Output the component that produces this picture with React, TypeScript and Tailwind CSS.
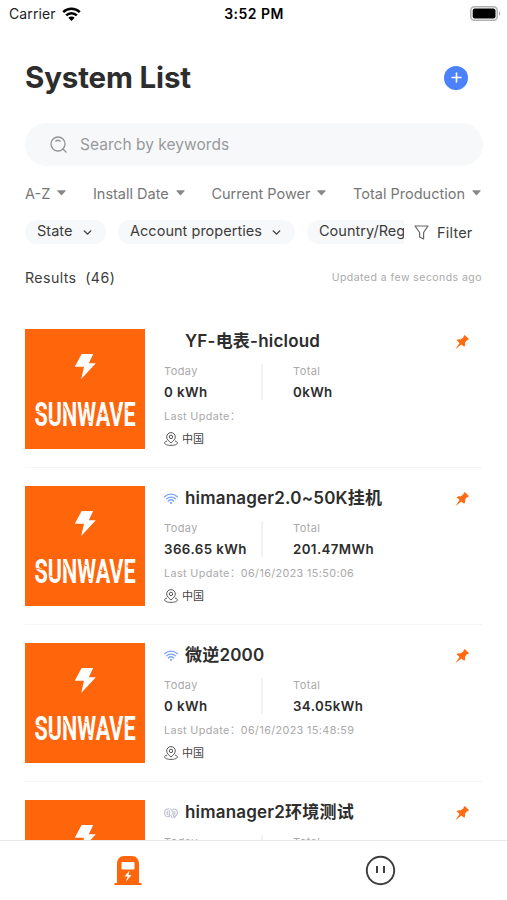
import React, { useState } from 'react';
import { Plus, ChevronDown } from 'lucide-react';

type Connection = 'none' | 'wifi' | 'offline';

interface System {
    name: string;
    today: string;
    total: string;
    lastUpdate: string;
    location: string;
    connection: Connection;
}

const systems: System[] = [
    { name: 'YF-电表-hicloud', today: '0 kWh', total: '0kWh', lastUpdate: '', location: '中国', connection: 'none' },
    { name: 'himanager2.0~50K挂机', today: '366.65 kWh', total: '201.47MWh', lastUpdate: '06/16/2023 15:50:06', location: '中国', connection: 'wifi' },
    { name: '微逆2000', today: '0 kWh', total: '34.05kWh', lastUpdate: '06/16/2023 15:48:59', location: '中国', connection: 'wifi' },
    { name: 'himanager2环境测试', today: '0 kWh', total: '0kWh', lastUpdate: '', location: '中国', connection: 'offline' },
];

const sortOptions = ['A-Z', 'Install Date', 'Current Power', 'Total Production'];

const StatusBar = () => (
    <div className="grid h-[27px] shrink-0 grid-cols-3 items-center pl-[9px] pr-[6px] text-black">
        <div className="flex items-center gap-[6px]">
            <span className="text-[14px] tracking-[0.1px] text-[#222]">Carrier</span>
            <svg width="19" height="14" viewBox="0 0 19 14" fill="none" stroke="black" strokeWidth="2.5">
                <path d="M1.2 5.2a12 12 0 0 1 16.6 0" />
                <path d="M4.2 8.4a7.6 7.6 0 0 1 10.6 0" />
                <path d="M9.5 14 6.3 10.7a4.6 4.6 0 0 1 6.4 0z" fill="black" stroke="none" />
            </svg>
        </div>
        <span className="-ml-[2px] text-center text-[14px] font-semibold tracking-[0.45px]">3:52 PM</span>
        <div className="flex justify-end">
            <svg width="31" height="15" viewBox="0 0 31 15">
                <rect x="0.8" y="0.8" width="26.4" height="13.4" rx="3.6" fill="#fff" stroke="#b0b0b0" strokeWidth="1.5" />
                <rect x="2.7" y="2.5" width="22.8" height="10" rx="2" fill="#000" />
                <path d="M29 5.2c1.6.6 1.6 4 0 4.6z" fill="#a8a8a8" />
            </svg>
        </div>
    </div>
);

const Logo = () => (
    <svg className="h-[120px] w-[120px] shrink-0" viewBox="0 0 120 120">
        <rect width="120" height="120" fill="#ff650b" />
        <path d="M56.6 25h11.6l-4.4 9.3h7L56.2 50l2.8-12.3h-9.2z" fill="#fff" />
        <g transform="translate(9.6 97) scale(0.635 1)">
            <text x="0" y="0" fill="#fff" fontSize="34" fontWeight="700" fontFamily="Roboto, sans-serif" textLength="159" lengthAdjust="spacing">SUNWAVE</text>
        </g>
        {/* worn streaks across the lettering */}
        <g stroke="#ff650b" strokeWidth="0.9" fill="none">
            <path d="M10 82l9 2M27 75l3 4M25 90l8 2M39 77l4 8M44 73v5M56 77l6 3M60 91l6 2M75 84l6 2M77 92l5 1M90 75l4 9M101 80l9 1M103 91l7 1" />
        </g>
    </svg>
);

const ConnectionIcon = ({ type }: { type: Connection }) => {
    if (type === 'wifi') {
        return (
            <svg width="14" height="12" viewBox="0 0 14 12" fill="none" stroke="#7ba3fa" strokeWidth="1.3" strokeLinecap="round">
                <path d="M.7 3.7a9.2 9.2 0 0 1 12.6 0M2.5 5.9a6.5 6.5 0 0 1 9 0M4.3 8a4 4 0 0 1 5.4 0" />
                <path d="M5.5 9.8a2.2 2.2 0 0 1 3 0L7 11.3z" fill="#7ba3fa" stroke="none" />
            </svg>
        );
    }
    if (type === 'offline') {
        return (
            <svg width="14" height="12" viewBox="0 0 14 12" fill="none" stroke="#b9bccb" strokeWidth="1.1" strokeLinecap="round">
                <path d="M4.8 1.8 2.2 2.4C1 3 .6 4.5.6 6s.5 2.9 1.7 3.5l2.5.2M3.2 4.4v3.2M5.3 3.5v6M6.7 2l1.400 1.600M6.800 8.500l1.200 2M9.200 2.200l2.200.1c1.400.5 2 1.900 2 3.300 0 1.600-.7 2.700-1.800 3.200l-1.400 1.800-.8-2.600M8.900 4.200v3.400M10.800 4.400v2.800" />
            </svg>
        );
    }
    return null;
};

const PinIcon = () => (
    <svg width="14" height="15" viewBox="0 0 14 15" fill="#ff6b12">
        <path d="M9.1.6c.4-.4.8-.4 1.2 0l3 3c.5.5.5 1 .1 1.3-.4.4-1 .4-1.5.4L10 7.7c.4 1.6.1 3-.8 4L6.3 9.4.4 14.3 4.5 8 1.6 5.3c1-.9 2.5-1.3 4-.8L8.5 2.2c0-.6.1-1.2.6-1.6z" />
    </svg>
);

const LocationIcon = () => (
    <svg width="14" height="14" viewBox="0 0 14 14" fill="none" stroke="#555" strokeWidth="1">
        <path d="M7 11C4.3 8.9 2.7 7 2.7 4.9a4.3 4.3 0 0 1 8.6 0c0 2.1-1.6 4-4.3 6.1z" />
        <circle cx="7" cy="4.9" r="1.7" />
        <path d="M3 9.1c-1.3.3-2.4.9-2.4 1.8C.6 12.4 3.5 13.4 7 13.4s6.4-1 6.4-2.5c0-.9-1.1-1.5-2.4-1.8" />
    </svg>
);

const SystemCard = ({ system }: { system: System }) => (
    <div className="flex h-[157px] shrink-0 border-b border-[#f5f5f5] pt-[18px]">
        <Logo />
        <div className="ml-[19px] min-w-0 flex-1">
            <div className="flex h-[26px] items-center">
                <div className="w-[21px] shrink-0">
                    <ConnectionIcon type={system.connection} />
                </div>
                <span className="flex-1 whitespace-nowrap text-[17px] font-semibold tracking-[0.2px] text-[#2d2d2d]">{system.name}</span>
                <div className="mr-[13px]">
                    <PinIcon />
                </div>
            </div>
            <div className="mt-[8px] flex h-[40px]">
                <div className="w-[97px] whitespace-nowrap">
                    <div className="text-[11px] leading-4 tracking-[0.4px] text-[#a9a9a9]">Today</div>
                    <div className="mt-[3px] text-[13.3px] font-semibold leading-5 tracking-[0.45px] text-[#2d2d2d]">{system.today}</div>
                </div>
                <div className="mt-px h-[36px] w-[2px] bg-[#f2f2f2]"></div>
                <div className="ml-[30px] whitespace-nowrap">
                    <div className="text-[11px] leading-4 tracking-[0.4px] text-[#a9a9a9]">Total</div>
                    <div className="mt-[3px] text-[13.3px] font-semibold leading-5 tracking-[0.4px] text-[#2d2d2d]">{system.total}</div>
                </div>
            </div>
            <div className="mt-[6px] whitespace-nowrap text-[10.8px] leading-4 tracking-[0.38px] text-[#a9a9a9]">
                Last Update：{system.lastUpdate}
            </div>
            <div className="mt-[6px] flex h-4 items-center gap-[4px]">
                <LocationIcon />
                <span className="text-[11px] leading-4 text-[#444]">{system.location}</span>
            </div>
        </div>
    </div>
);

const App = () => {
    const [keyword, setKeyword] = useState('');

    return (
        <div className="flex h-[900px] w-[507px] flex-col overflow-hidden bg-white font-[Inter,'Noto_Sans_CJK_SC',sans-serif]">
            <StatusBar />

            {/* Header */}
            <div className="flex h-[96px] shrink-0 items-center justify-between pl-[25px] pr-[39px] pt-[5px]">
                <h1 className="text-[29.5px] font-bold tracking-[-0.15px] text-[#2d2d2d]">System List</h1>
                <button className="flex h-6 w-6 items-center justify-center rounded-full bg-[#4b82fb] text-white">
                    <Plus className="h-[15px] w-[15px]" strokeWidth={2.6} />
                </button>
            </div>

            {/* Search */}
            <div className="ml-[25px] mr-[24px] flex h-[43px] shrink-0 items-center gap-[13px] rounded-full bg-[#f6f8f9] pl-[25px]">
                <svg width="17" height="17" viewBox="0 0 17 17" fill="none" stroke="#929496" strokeWidth="1.3" strokeLinecap="round">
                    <circle cx="8" cy="8" r="7" />
                    <path d="M13.2 13.2 16 16M5.8 5.2c1.3-1.1 3.1-1.1 4.4 0" />
                </svg>
                <input
                    type="text"
                    value={keyword}
                    onChange={(e) => setKeyword(e.target.value)}
                    className="flex-1 bg-transparent text-[15.5px] tracking-[0.03px] text-[#2d2d2d] outline-none placeholder:text-[#989a9c]"
                    placeholder="Search by keywords"
                />
            </div>

            {/* Sort options */}
            <div className="mt-[18px] flex h-5 shrink-0 items-center justify-between pl-[25px] pr-[26px]">
                {sortOptions.map((option) => (
                    <button key={option} className="flex items-center gap-[7px] whitespace-nowrap text-[14.5px] text-[#777]">
                        {option}
                        <svg className="mb-[2px]" width="9" height="6" viewBox="0 0 9 6" fill="#888">
                            <path d="M1 .3h7c.6 0 .8.6.4 1L5 5c-.3.3-.7.3-1 0L.6 1.3C.2.9.4.3 1 .3z" />
                        </svg>
                    </button>
                ))}
            </div>

            {/* Filter chips */}
            <div className="mt-[16px] flex h-6 shrink-0 pl-[25px]">
                <div className="flex w-[379px] gap-3 overflow-hidden whitespace-nowrap text-[14.5px] tracking-[0.03px] text-[#3d3d3d]">
                    <button className="flex w-[81px] shrink-0 items-center justify-between rounded-full bg-[#f6f8f9] pb-[2px] pl-[12px] pr-[12px]">
                        State
                        <ChevronDown className="mt-[2px] h-[13px] w-[13px]" strokeWidth={2.6} />
                    </button>
                    <button className="flex w-[177px] shrink-0 items-center justify-between rounded-full bg-[#f6f8f9] pb-[2px] pl-[12px] pr-[12px]">
                        Account properties
                        <ChevronDown className="mt-[2px] h-[13px] w-[13px]" strokeWidth={2.6} />
                    </button>
                    <button className="flex w-[160px] shrink-0 items-center rounded-full bg-[#f6f8f9] pb-[2px] pl-[12px]">
                        Country/Region
                    </button>
                </div>
                <button className="ml-[10px] flex items-center gap-[8px] pt-px text-[14.5px] tracking-[0.2px] text-[#3d3d3d]">
                    <svg width="15" height="15" viewBox="0 0 15 15" fill="none" stroke="#666" strokeWidth="1.2" strokeLinejoin="round">
                        <path d="M1 1h13L9.6 7.5V14L5.6 12V7.5z" />
                    </svg>
                    Filter
                </button>
            </div>

            {/* Results */}
            <div className="mt-[24px] flex h-5 shrink-0 items-center justify-between pl-[25px] pr-[25px]">
                <span className="text-[14.2px] tracking-[0.4px] text-[#3d3d3d]">Results&nbsp; (46)</span>
                <span className="text-[10.5px] tracking-[0.45px] text-[#aaa]">Updated a few seconds ago</span>
            </div>

            {/* System list */}
            <div className="mt-[23px] flex min-h-0 flex-1 flex-col overflow-hidden px-[25px]">
                {systems.map((system) => (
                    <SystemCard key={system.name} system={system} />
                ))}
            </div>

            {/* Bottom tabs */}
            <div className="grid h-[60px] shrink-0 grid-cols-2 justify-items-center border-t border-[#e9e9e9] bg-white pt-[14px]">
                <button className="ml-[2px] h-[31px]">
                    <svg width="28" height="31" viewBox="0 0 28 31">
                        <path d="M3 28V9c0-5 3-8 7-8h8c4 0 7 3 7 8v19h2.5v2H.5v-2z" fill="#ff650b" />
                        <rect x="7.5" y="7" width="13" height="7.5" rx="1" fill="#fff" />
                        <path d="m15.5 15.5-5 6h3L12 26.5l5.5-6.5h-3z" fill="#fff" />
                    </svg>
                </button>
                <button className="h-[31px]">
                    <svg width="31" height="31" viewBox="0 0 31 31" fill="none" stroke="#3d3d3d">
                        <circle cx="15.5" cy="15.5" r="13.7" strokeWidth="1.9" />
                        <path d="M12 11v7M19 11v7" strokeWidth="2" />
                    </svg>
                </button>
            </div>
        </div>
    );
};

export default App;
